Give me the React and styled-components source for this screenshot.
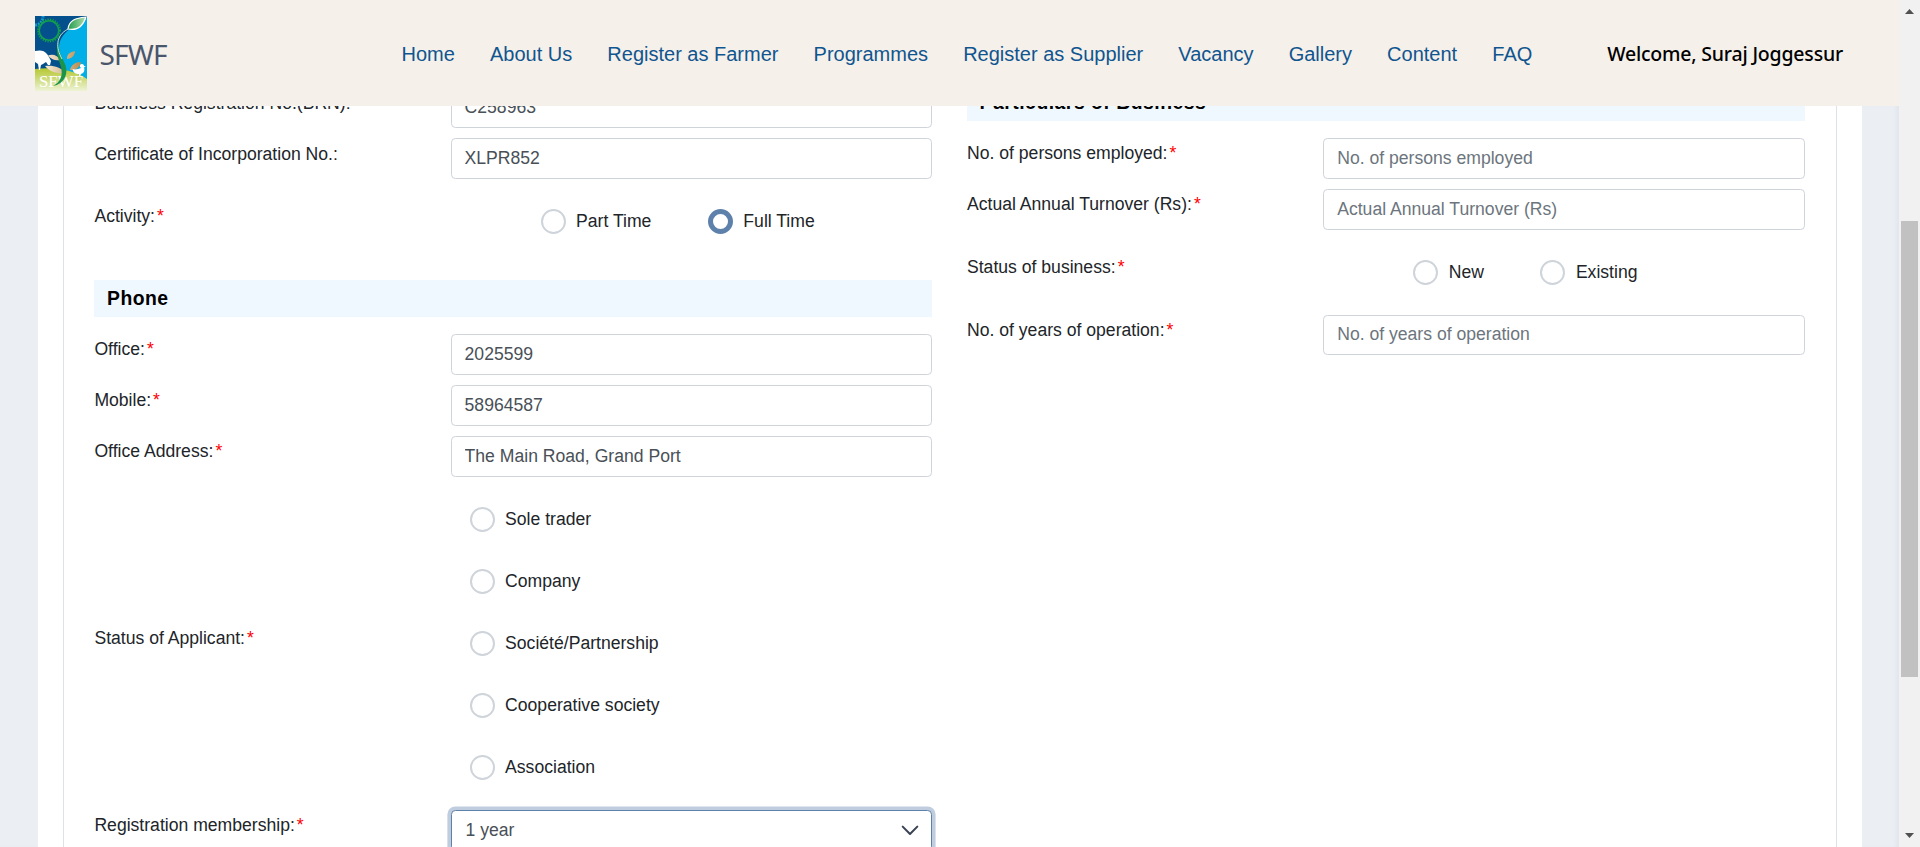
import React from 'react';
import styled, { createGlobalStyle, css } from 'styled-components';

const Global = createGlobalStyle`
  *, *::before, *::after { box-sizing: border-box; }
  body { margin: 0; background: #ebeff4; overflow: hidden; }
`;
const Window = styled.div`
  display: flex;
  height: 847px;
  overflow: hidden;
  font: 17.6px/26px "Liberation Sans", Arial, sans-serif;
  color: #212529;
`;
const Page = styled.div`
  width: 1899px;
  display: flex;
  flex-direction: column;
`;
const Header = styled.header`
  flex: none;
  height: 106px;
  background: #f5f0ea;
  display: flex;
  align-items: center;
  padding: 0 56px 0 35px;
`;
const Logo = styled.svg`
  flex: none;
  width: 52px;
  height: 75px;
  margin-top: 1px;
`;
const Brand = styled.span`
  width: 314.5px;
  flex: none;
  padding: 2px 0 0 12.5px;
  font: 28px/40px "Noto Sans", "Open Sans", sans-serif;
  letter-spacing: -0.8px;
  color: #4a566c;
`;
const Nav = styled.nav`
  display: flex;
  flex: 1;
  gap: 35.1px;
  padding-top: 1px;
`;
const NavLink = styled.a`
  font-size: 20px;
  line-height: 28px;
  color: #10558f;
  white-space: nowrap;
`;
const Welcome = styled.span`
  padding-top: 2px;
  font: 500 19.5px/28px "Noto Sans", "Open Sans", sans-serif;
  letter-spacing: -0.2px;
  color: #000;
  white-space: nowrap;
`;
const Content = styled.main`
  flex: 1;
  min-height: 0;
  overflow: hidden;
  display: flex;
  padding: 0 37px 0 38px;
  background: #ebeff4;
  box-shadow: inset -5px 0 5px -3px #dfe2ea;
`;
const Card = styled.section`
  flex: 1;
  background: #fff;
  padding: 0 25px;
`;
const Form = styled.form`
  display: grid;
  grid-template-columns: 837.6px 837.6px;
  column-gap: 35px;
  height: 900px;
  margin-top: -22px;
  padding-left: 30.4px;
  border: solid #dee2e6;
  border-width: 0 1px;
`;
const Column = styled.div`
  padding-top: ${(p) => p.$top || 0}px;
`;
const Heading = styled.h2`
  margin: 0 0 17px;
  height: 37px;
  padding-left: 12.6px;
  font-size: 19.36px;
  line-height: 36px;
  letter-spacing: 0.5px;
  color: #000;
  background: #f0f8ff;
`;
const Row = styled.div`
  display: flex;
  height: ${(p) => p.$h || 51}px;
`;
const Label = styled.label`
  flex: none;
  width: 356.2px;
  padding-top: ${(p) => p.$drop ?? 2}px;
  white-space: nowrap;
`;
const Star = styled.span`
  color: #f00;
  margin-left: 2px;
`;
const field = css`
  width: 481.4px;
  height: ${(p) => p.$h || 41}px;
  border: 1px solid #ced4da;
  border-radius: 4.4px;
  background: #fff;
  color: #495057;
  font: inherit;
`;
const Input = styled.input`
  ${field}
  padding: 0 13px 1px;
  &::placeholder { color: #6c757d; opacity: 1; }
`;
const Select = styled.div`
  ${field}
  display: flex;
  align-items: center;
  justify-content: space-between;
  padding: 0 12px 2px 14px;
  border-color: #5e81ac;
  box-shadow: 0 0 0 3.6px rgba(94, 129, 172, 0.4);
`;
const Choices = styled.div`
  display: flex;
  align-items: flex-start;
  padding: 20px 0 0 ${(p) => p.$indent}px;
  gap: ${(p) => p.$gap}px;
`;
const Stack = styled.div`
  display: flex;
  flex-direction: column;
  gap: 37px;
  padding: 20px 0 0 19px;
`;
const Choice = styled.label`
  display: flex;
  gap: 10.5px;
  height: 25px;
  line-height: 24px;
  white-space: nowrap;
`;
const Dot = styled.span`
  flex: none;
  width: 25px;
  height: 25px;
  border-radius: 50%;
  background: #fff;
  border: ${(p) => (p.$on ? '5px solid #5e81ac' : '2px solid #ced4da')};
`;
const Scrollbar = styled.aside`
  width: 21px;
  background: #f1f1f1;
  display: flex;
  flex-direction: column;
  align-items: center;
  padding: 9px 0;
`;
const Arrow = styled.svg`
  width: 9px;
  height: 5px;
  flex: none;
`;
const Thumb = styled.div`
  width: 17px;
  height: 456px;
  margin: 207px 0 auto;
  background: #c1c1c1;
`;

const links = ['Home', 'About Us', 'Register as Farmer', 'Programmes', 'Register as Supplier', 'Vacancy', 'Gallery', 'Content', 'FAQ'];
const statuses = ['Sole trader', 'Company', 'Société/Partnership', 'Cooperative society', 'Association'];

function Caption({ text, required = true, drop }) {
  return <Label $drop={drop}>{text}{required && <Star>*</Star>}</Label>;
}
function Option({ text, on }) {
  return <Choice><Dot $on={on} />{text}</Choice>;
}
function Field({ text, required, drop, h, inputHeight, ...rest }) {
  return (
    <Row $h={h}>
      <Caption text={text} required={required} drop={drop} />
      <Input $h={inputHeight} {...rest} />
    </Row>
  );
}
function BrandLogo() {
  return (
    <Logo viewBox="0 0 52 75">
      <defs>
        <linearGradient id="hill" x1="0" y1="0" x2="0" y2="1"><stop stopColor="#b5c730" /><stop offset="1" stopColor="#eef3d6" /></linearGradient>
        <linearGradient id="leaf"><stop stopColor="#1f9d4b" /><stop offset="1" stopColor="#b5dcae" /></linearGradient>
        <linearGradient id="husk"><stop stopColor="#f7ecd9" /><stop offset="1" stopColor="#b98d4e" /></linearGradient>
      </defs>
      <path fill="#04508c" d="M0 0h52v75H0z" />
      <path fill="#00aee8" d="M52 2C38 10 25 17 24 31c0 14 11 21 8 36h20z" />
      <path fill="none" stroke="#159bd3" strokeWidth="3" strokeDasharray="2 1" d="M0 9C5 9 8 5 8 0" />
      <circle cx="14" cy="14.500" r="9.800" fill="none" stroke="#13a04d" strokeWidth="1.600" />
      <circle cx="14" cy="14.500" r="11" fill="none" stroke="#13a04d" strokeWidth="2" strokeDasharray="1.2 1.3" />
      <path fill="url(#hill)" d="M0 53c17-2 38 0 52 10v12H0z" />
      <path fill="#fff" d="M0 35c5-1 9-1 12 3l2 3 2 4-1 4-2 0-2-3-3 2-2 1-1 5H4l-1-6-3-2z" />
      <path fill="url(#husk)" d="M13 39.500c5-2 10 0 12 4.500-5 1-9-1-12-4.500zM10 50c8-1 16 1 20 7-8 1-15-1-20-7zM32 43c0-5 3-7 8-8 0 4-3 8-8 8zM35 54c1-5 5-8 11-8-1 5-5 9-11 8z" />
      <path fill="#fff" d="M37.500 53c3 1 6 0 8.500-1-2-2-1-4 1-4 1.500 0 2 1 2 2l2 .5-2 .8c1 3 0 6-3 6.700l-1 2h-1v-2c-4 0-6-2-6.500-5z" />
      <text x="4" y="70.500" fill="#fff" fontFamily="Liberation Serif, serif" fontSize="16" textLength="44" lengthAdjust="spacingAndGlyphs">SFWF</text>
      <path fill="#19944a" d="M25 23c-4 9 1 16 5 25 4 10-1 20-12 22 8-4 10-11 8-19-3-10-7-18-1-28z" />
      <path fill="none" stroke="#d5efe0" strokeWidth=".9" d="M33 13C20 20 21 32 27 43" />
      <path fill="url(#leaf)" stroke="#fff" strokeWidth="1.200" d="M33 13C34 4 41 2 51 1c-3 9-9 14-18 12z" />
    </Logo>
  );
}

export default function App() {
  return (
    <Window>
      <Global />
      <Page>
        <Header>
          <BrandLogo />
          <Brand>SFWF</Brand>
          <Nav>{links.map((l) => <NavLink key={l}>{l}</NavLink>)}</Nav>
          <Welcome>Welcome, Suraj Joggessur</Welcome>
        </Header>
        <Content>
          <Card>
            <Form>
              <Column $top={3}>
                <Field text="Business Registration No.(BRN):" required={false} drop={3} defaultValue="C258963" />
                <Field text="Certificate of Incorporation No.:" required={false} drop={3} defaultValue="XLPR852" />
                <Row $h={91}>
                  <Caption text="Activity:" drop={14} />
                  <Choices $indent={90} $gap={56.5}>
                    <Option text="Part Time" />
                    <Option text="Full Time" on />
                  </Choices>
                </Row>
                <Heading>Phone</Heading>
                <Field text="Office:" defaultValue="2025599" />
                <Field text="Mobile:" defaultValue="58964587" />
                <Field text="Office Address:" defaultValue="The Main Road, Grand Port" />
                <Row $h={323}>
                  <Caption text="Status of Applicant:" drop={138} />
                  <Stack>{statuses.map((s) => <Option key={s} text={s} />)}</Stack>
                </Row>
                <Row>
                  <Caption text="Registration membership:" />
                  <Select>
                    1 year
                    <svg width="18" height="18" viewBox="0 0 16 16" fill="none" stroke="#3b4252" strokeWidth="1.8" strokeLinecap="round" strokeLinejoin="round"><path d="m1.5 5 6.5 6.5L14.500 5" /></svg>
                  </Select>
                </Row>
              </Column>
              <Column>
                <Heading>Particulars of Business</Heading>
                <Field text="No. of persons employed:" placeholder="No. of persons employed" />
                <Field text="Actual Annual Turnover (Rs):" placeholder="Actual Annual Turnover (Rs)" />
                <Row $h={75}>
                  <Caption text="Status of business:" drop={14} />
                  <Choices $indent={90} $gap={56.5}>
                    <Option text="New" />
                    <Option text="Existing" />
                  </Choices>
                </Row>
                <Field text="No. of years of operation:" placeholder="No. of years of operation" inputHeight={40} />
              </Column>
            </Form>
          </Card>
        </Content>
      </Page>
      <Scrollbar>
        <Arrow viewBox="0 0 9 5"><path fill="#505050" d="M0 5h9L4.500 0z" /></Arrow>
        <Thumb />
        <Arrow viewBox="0 0 9 5"><path fill="#505050" d="M0 0h9L4.500 5z" /></Arrow>
      </Scrollbar>
    </Window>
  );
}
